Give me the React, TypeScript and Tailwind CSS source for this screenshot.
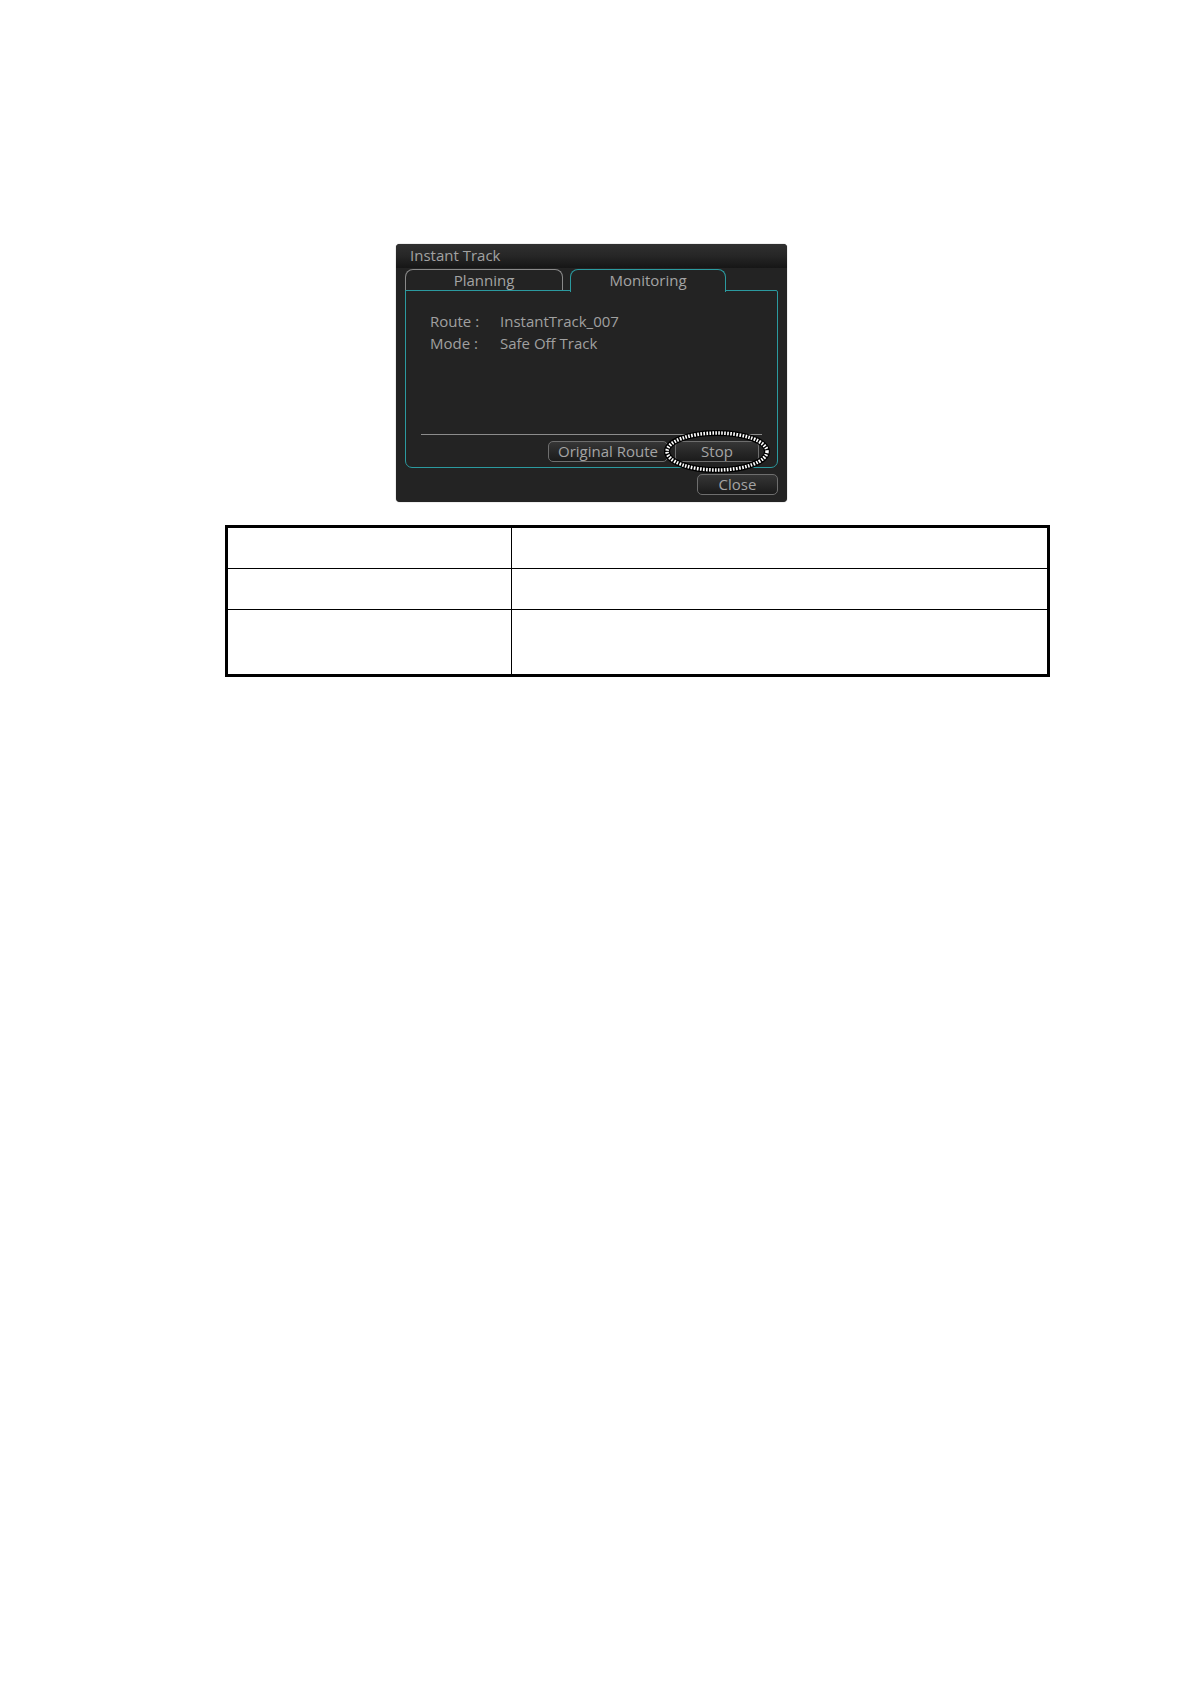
import React from "react";

const font = { fontFamily: '"Open Sans", "Noto Sans", sans-serif' };

function Btn({ label, w }: { label: string; w: string }) {
  return (
    <div
      className={`${w} h-[21px] rounded-[5px] border border-[#6e6e6e] bg-gradient-to-b from-[#363636] to-[#1b1b1b] flex items-center justify-center text-[15px] leading-none text-[#a4a4a4]`}
    >
      {label}
    </div>
  );
}

export default function App() {
  return (
    <div className="w-[1190px] h-[1684px] bg-white" style={font}>
      <div className="pt-[244px] flex flex-col">
        <div className="ml-[396px] w-[391px] h-[258px] rounded-[4px] bg-[#232323] flex flex-col shadow-[0_0_1px_#555]">
          <div className="h-[24px] rounded-t-[4px] bg-gradient-to-b from-[#303030] via-[#262626] to-[#161616] pl-[14px] pt-[1px] flex items-start">
            <span className="text-[15px] leading-[20px] text-[#a2a2a2]">Instant Track</span>
          </div>
          <div className="px-[9px] pt-[1px] flex flex-col">
            <div className="flex gap-[7px] h-[22px]">
              <div className="w-[158px] h-[22px] rounded-t-[8px] border border-b-0 border-[#8a8a8a] flex items-center justify-center text-[15px] text-[#a4a4a4] leading-none">
                Planning
              </div>
              <div className="relative z-10 w-[156px] h-[23px] rounded-t-[8px] border border-b-0 border-[#2b9a9f] bg-[#232323] flex items-center justify-center text-[15px] text-[#a4a4a4] leading-none pb-[1px]">
                Monitoring
              </div>
            </div>
            <div className="-mt-[1px] h-[178px] border border-[#2b9a9f] rounded-b-[7px] rounded-tr-[2px] flex flex-col">
              <div className="pl-[24px] pt-[19px] grid grid-cols-[70px_auto] text-[15px] leading-[22px] text-[#a0a0a0]">
                <span>Route :</span>
                <span>InstantTrack_007</span>
                <span>Mode :</span>
                <span>Safe Off Track</span>
              </div>
              <div className="flex-1" />
              <div className="mx-[15px] h-px bg-[#8c8c8c]" />
              <div className="flex justify-end gap-[7px] pr-[18px] pt-[6px] pb-[5px] relative">
                <Btn label="Original Route" w="w-[120px]" />
                <Btn label="Stop" w="w-[84px]" />
                <svg
                  className="absolute right-[7px] -top-[5px]"
                  width="106"
                  height="43"
                  viewBox="0 0 106 43"
                >
                  <ellipse cx="53" cy="21.5" rx="50" ry="18.5" fill="none" stroke="#000" strokeWidth="6" />
                  <ellipse
                    cx="53"
                    cy="21.5"
                    rx="50"
                    ry="18.5"
                    fill="none"
                    stroke="#fff"
                    strokeWidth="3.5"
                    strokeDasharray="1.6 1.4"
                  />
                </svg>
              </div>
            </div>
            <div className="flex justify-end pt-[6px]">
              <Btn label="Close" w="w-[81px]" />
            </div>
          </div>
        </div>

        <table className="ml-[225px] mt-[23px] w-[825px] border-collapse border-[3px] border-black">
          <tbody>
            <tr className="h-[42px]">
              <td className="w-[285px] border border-black"></td>
              <td className="border border-black"></td>
            </tr>
            <tr className="h-[41px]">
              <td className="border border-black"></td>
              <td className="border border-black"></td>
            </tr>
            <tr className="h-[66px]">
              <td className="border border-black"></td>
              <td className="border border-black"></td>
            </tr>
          </tbody>
        </table>
      </div>
    </div>
  );
}
